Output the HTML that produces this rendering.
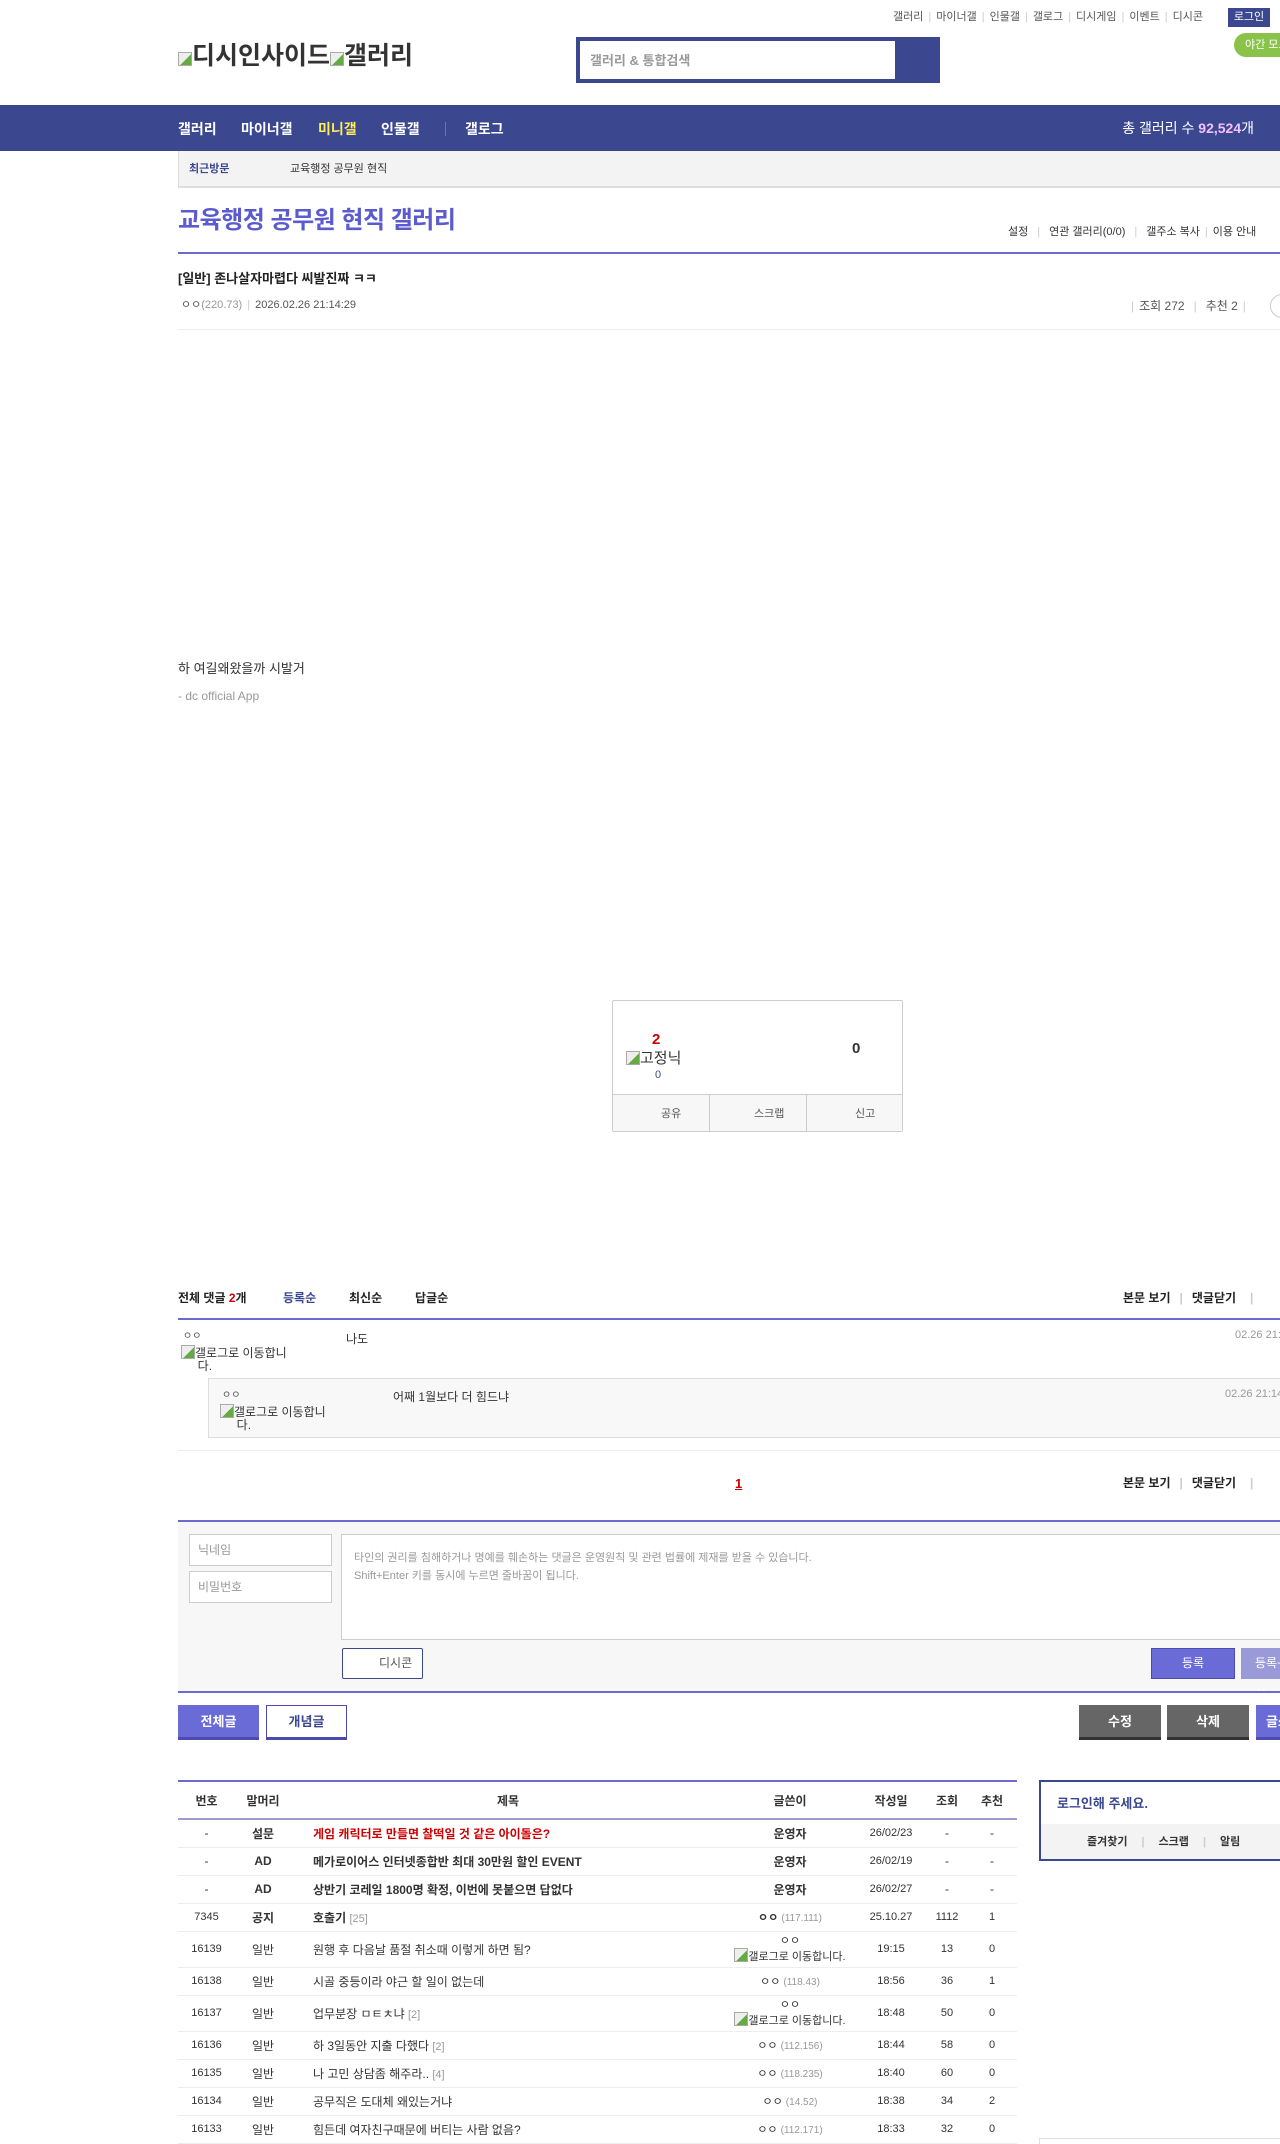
<!DOCTYPE html>
<html><head><meta charset="utf-8"><style>
*{margin:0;padding:0;box-sizing:border-box}
body{width:1280px;height:2144px;position:relative;overflow:hidden;background:#fff;font-family:"Liberation Sans","Noto Sans CJK KR",sans-serif;font-size:12px;color:#333}
.a{position:absolute;white-space:nowrap;line-height:1}
.sep{color:#ccc;margin:0 5px}
.sep2{color:#ccc;margin:0 9px}
.bx{position:absolute}
.img{display:inline-block;width:14px;height:14px;border:1px solid #aaa;background:linear-gradient(135deg,#eee 55%,#6a4 55%);vertical-align:-2px}
td{height:28px;text-align:center;font-size:12px;border-bottom:1px solid #eee;padding:0}
</style></head><body>
<div class="a" style="top:12px;left:893px;font-size:11px;color:#555">갤러리<span class="sep">|</span>마이너갤<span class="sep">|</span>인물갤<span class="sep">|</span>갤로그<span class="sep">|</span>디시게임<span class="sep">|</span>이벤트<span class="sep">|</span>디시콘</div>
<div class="bx" style="left:1228px;top:8px;width:42px;height:19px;background:#3b4890;color:#fff;font-size:11px;text-align:center;line-height:19px">로그인</div>
<div class="bx" style="left:1234px;top:33px;width:60px;height:24px;background:#8bc34a;border-radius:12px;color:#fff;font-size:11px;line-height:24px;padding-left:11px">야간 모드</div>
<div class="a" style="top:44px;left:178px;font-size:25px;font-weight:bold;color:#333"><span class="img"></span>디시인사이드<span class="img"></span>갤러리</div>
<div class="bx" style="left:576px;top:37px;width:364px;height:46px;background:#3b4890"></div>
<div class="bx" style="left:580px;top:41px;width:315px;height:38px;background:#fff"></div>
<div class="a" style="left:590px;top:54px;font-size:13px;color:#999;font-weight:bold">갤러리 &amp; 통합검색</div>
<div class="bx" style="left:0;top:105px;width:1280px;height:46px;background:#3b4890"></div>
<div class="a" style="top:122px;left:178px;font-size:14px;font-weight:bold;color:#fff">갤러리</div>
<div class="a" style="top:122px;left:241px;font-size:14px;font-weight:bold;color:#fff">마이너갤</div>
<div class="a" style="top:122px;left:318px;font-size:14px;font-weight:bold;color:#ffee55">미니갤</div>
<div class="a" style="top:122px;left:381px;font-size:14px;font-weight:bold;color:#fff">인물갤</div>
<div class="bx" style="top:122px;left:445px;width:1px;height:14px;background:#6a75b0"></div>
<div class="a" style="top:122px;left:465px;font-size:14px;font-weight:bold;color:#fff">갤로그</div>
<div class="a" style="top:121px;right:26px;font-size:14px;color:#fff">총 갤러리 수 <b style="color:#f4c0ff">92,524</b>개</div>
<div class="bx" style="left:178px;top:151px;width:1102px;height:37px;background:#f3f3f3;border-left:1px solid #ddd;border-bottom:2px solid #ddd"></div>
<div class="a" style="top:164px;left:189px;font-size:11px;font-weight:bold;color:#3b4890">최근방문</div>
<div class="a" style="top:164px;left:290px;font-size:11px;color:#333">교육행정 공무원 현직</div>
<div class="a" style="top:209px;left:178px;font-size:24px;font-weight:bold;color:#5b5bcf;letter-spacing:-0.5px">교육행정 공무원 현직 갤러리</div>
<div class="a" style="top:227px;left:1008px;font-size:11px;color:#333">설정<span class="sep2">|</span>연관 갤러리(0/0)<span class="sep2">|</span>갤주소 복사<span class="sep">|</span>이용 안내</div>
<div class="bx" style="left:178px;top:252px;width:1102px;height:2px;background:#6b6bcb"></div>
<div class="a" style="top:272px;left:178px;font-size:13px;font-weight:bold;color:#222">[일반] 존나살자마렵다 씨발진짜 ㅋㅋ</div>
<div class="a" style="top:300px;left:181px;font-size:11px;color:#555">ㅇㅇ<span style="color:#999">(220.73)</span><span class="sep">|</span>2026.02.26 21:14:29</div>
<div class="a" style="top:300px;left:1126px;font-size:12px;color:#555"><span class="sep">|</span>조회 272<span class="sep2">|</span>추천 2<span class="sep">|</span></div>
<div class="bx" style="left:1270px;top:294px;width:24px;height:24px;border:1px solid #ccc;border-radius:12px"></div>
<div class="bx" style="left:178px;top:329px;width:1102px;height:1px;background:#eee"></div>
<div class="a" style="top:662px;left:178px;font-size:13px;color:#333">하 여길왜왔을까 시발거</div>
<div class="a" style="top:690px;left:178px;font-size:12px;color:#999">- dc official App</div>
<div class="bx" style="left:612px;top:1000px;width:291px;height:132px;border:1px solid #ccc;border-radius:2px"></div>
<div class="bx" style="left:613px;top:1094px;width:289px;height:37px;background:#f7f7f7;border-top:1px solid #ccc"></div>
<div class="bx" style="left:709px;top:1094px;width:1px;height:37px;background:#ccc"></div>
<div class="bx" style="left:806px;top:1094px;width:1px;height:37px;background:#ccc"></div>
<div class="a" style="top:1032px;left:652px;font-size:15px;font-weight:bold;color:#c00">2</div>
<div class="a" style="top:1051px;left:626px;font-size:15px;color:#333"><span class="img"></span>고정닉</div>
<div class="a" style="top:1070px;left:655px;font-size:11px;color:#3b4890">0</div>
<div class="a" style="top:1041px;left:852px;font-size:15px;font-weight:bold;color:#333">0</div>
<div class="a" style="top:1109px;left:661px;font-size:11px;color:#555">공유</div>
<div class="a" style="top:1109px;left:754px;font-size:11px;color:#555">스크랩</div>
<div class="a" style="top:1109px;left:855px;font-size:11px;color:#555">신고</div>
<div class="a" style="top:1292px;left:178px;font-size:12px;font-weight:bold;color:#222">전체 댓글 <span style="color:#c00">2</span>개</div>
<div class="a" style="top:1292px;left:283px;font-size:12px;font-weight:bold;color:#3b4890">등록순</div>
<div class="a" style="top:1292px;left:349px;font-size:12px;font-weight:bold;color:#222">최신순</div>
<div class="a" style="top:1292px;left:415px;font-size:12px;font-weight:bold;color:#222">답글순</div>
<div class="a" style="top:1292px;left:1123px;font-size:12px;font-weight:bold;color:#222">본문 보기<span class="sep2">|</span>댓글닫기<span class="sep" style="margin:0 14px">|</span></div>
<div class="bx" style="left:178px;top:1318px;width:1102px;height:2px;background:#6b6bcb"></div>
<div class="a" style="top:1332px;left:183px;font-size:10px;color:#555">ㅇㅇ</div>
<div class="a" style="top:1345px;left:181px;font-size:12px;color:#333;line-height:13px"><span class="img"></span>갤로그로 이동합니<br>&nbsp;&nbsp;&nbsp;&nbsp;&nbsp;다.</div>
<div class="a" style="top:1333px;left:346px;font-size:12px;color:#333">나도</div>
<div class="a" style="top:1330px;left:1235px;font-size:11px;color:#999">02.26 21:13</div>
<div class="bx" style="left:208px;top:1378px;width:1080px;height:60px;background:#f8f8f8;border:1px solid #ddd"></div>
<div class="a" style="top:1391px;left:222px;font-size:10px;color:#555">ㅇㅇ</div>
<div class="a" style="top:1404px;left:220px;font-size:12px;color:#333;line-height:13px"><span class="img"></span>갤로그로 이동합니<br>&nbsp;&nbsp;&nbsp;&nbsp;&nbsp;다.</div>
<div class="a" style="top:1391px;left:393px;font-size:12px;color:#333">어째 1월보다 더 힘드냐</div>
<div class="a" style="top:1389px;left:1225px;font-size:11px;color:#999">02.26 21:14</div>
<div class="bx" style="left:178px;top:1450px;width:1102px;height:1px;background:#eee"></div>
<div class="a" style="top:1477px;left:735px;font-size:13px;font-weight:bold;color:#c00;text-decoration:underline">1</div>
<div class="a" style="top:1477px;left:1123px;font-size:12px;font-weight:bold;color:#222">본문 보기<span class="sep2">|</span>댓글닫기<span class="sep" style="margin:0 14px">|</span></div>
<div class="bx" style="left:178px;top:1520px;width:1102px;height:2px;background:#6b6bcb"></div>
<div class="bx" style="left:178px;top:1522px;width:1102px;height:170px;background:#f7f7f7"></div>
<div class="bx" style="left:189px;top:1534px;width:143px;height:32px;background:#fff;border:1px solid #ccc"></div>
<div class="a" style="top:1544px;left:198px;font-size:12px;color:#999">닉네임</div>
<div class="bx" style="left:189px;top:1571px;width:143px;height:32px;background:#fff;border:1px solid #ccc"></div>
<div class="a" style="top:1581px;left:198px;font-size:12px;color:#999">비밀번호</div>
<div class="bx" style="left:341px;top:1534px;width:950px;height:106px;background:#fff;border:1px solid #ccc"></div>
<div class="a" style="top:1549px;left:354px;font-size:11px;color:#999;line-height:18px">타인의 권리를 침해하거나 명예를 훼손하는 댓글은 운영원칙 및 관련 법률에 제재를 받을 수 있습니다.<br>Shift+Enter 키를 동시에 누르면 줄바꿈이 됩니다.</div>
<div class="bx" style="left:342px;top:1648px;width:81px;height:31px;background:#fff;border:1px solid #3b4890;border-radius:2px;color:#555;font-size:12px;line-height:29px;padding-left:36px">디시콘</div>
<div class="bx" style="left:1151px;top:1648px;width:84px;height:31px;background:#6b6bd8;border:1px solid #4b4bb0;color:#fff;font-size:12px;text-align:center;line-height:29px">등록</div>
<div class="bx" style="left:1241px;top:1648px;width:60px;height:31px;background:#9a9ad8;color:#fff;font-size:12px;line-height:31px;padding-left:14px">등록+추천</div>
<div class="bx" style="left:178px;top:1691px;width:1102px;height:2px;background:#6b6bcb"></div>
<div class="bx" style="left:178px;top:1705px;width:81px;height:35px;background:#6b6bd8;border-bottom:3px solid #4b4bb0;color:#fff;font-size:13px;font-weight:bold;text-align:center;line-height:33px">전체글</div>
<div class="bx" style="left:266px;top:1705px;width:81px;height:35px;background:#fff;border:1px solid #4b4bb0;border-bottom:3px solid #4b4bb0;color:#3b4890;font-size:13px;font-weight:bold;text-align:center;line-height:31px">개념글</div>
<div class="bx" style="left:1079px;top:1705px;width:82px;height:35px;background:#666;border-bottom:3px solid #333;color:#fff;font-size:13px;font-weight:bold;text-align:center;line-height:33px">수정</div>
<div class="bx" style="left:1167px;top:1705px;width:82px;height:35px;background:#666;border-bottom:3px solid #333;color:#fff;font-size:13px;font-weight:bold;text-align:center;line-height:33px">삭제</div>
<div class="bx" style="left:1256px;top:1705px;width:82px;height:35px;background:#6b6bd8;border-bottom:3px solid #4b4bb0;color:#fff;font-size:13px;font-weight:bold;line-height:33px;padding-left:10px">글쓰기</div>
<div class="bx" style="left:178px;top:1780px;width:839px;height:2px;background:#6b6bcb"></div>
<table style="position:absolute;left:178px;top:1782px;width:839px;border-collapse:collapse;table-layout:fixed">
<colgroup><col style="width:57px"><col style="width:56px"><col style="width:434px"><col style="width:130px"><col style="width:72px"><col style="width:40px"><col style="width:50px"></colgroup>
<tr style="font-weight:bold"><td style="height:37px;border-bottom:2px solid #9c9cd0">번호</td><td style="border-bottom:2px solid #9c9cd0">말머리</td><td style="border-bottom:2px solid #9c9cd0">제목</td><td style="border-bottom:2px solid #9c9cd0">글쓴이</td><td style="border-bottom:2px solid #9c9cd0">작성일</td><td style="border-bottom:2px solid #9c9cd0">조회</td><td style="border-bottom:2px solid #9c9cd0">추천</td></tr>
<tr><td>-</td><td><b>설문</b></td><td style="text-align:left;padding-left:22px;color:#c00;font-weight:bold">게임 캐릭터로 만들면 찰떡일 것 같은 아이돌은?</td><td><b>운영자</b></td><td style="font-size:11px">26/02/23</td><td>-</td><td>-</td></tr>
<tr><td>-</td><td><b>AD</b></td><td style="text-align:left;padding-left:22px;font-weight:bold">메가로이어스 인터넷종합반 최대 30만원 할인 EVENT</td><td><b>운영자</b></td><td style="font-size:11px">26/02/19</td><td>-</td><td>-</td></tr>
<tr><td>-</td><td><b>AD</b></td><td style="text-align:left;padding-left:22px;font-weight:bold">상반기 코레일 1800명 확정, 이번에 못붙으면 답없다</td><td><b>운영자</b></td><td style="font-size:11px">26/02/27</td><td>-</td><td>-</td></tr>
<tr><td style="font-size:11px">7345</td><td><b>공지</b></td><td style="text-align:left;padding-left:22px;font-weight:bold">호출기 <span style="color:#999;font-weight:normal;font-size:11px">[25]</span></td><td style="font-size:11px"><b>ㅇㅇ</b> <span style="color:#999;font-size:10px">(117.111)</span></td><td style="font-size:11px">25.10.27</td><td style="font-size:11px">1112</td><td style="font-size:11px">1</td></tr>
<tr><td style="height:36px;font-size:11px">16139</td><td>일반</td><td style="text-align:left;padding-left:22px">원행 후 다음날 품절 취소때 이렇게 하면 됨?</td><td style="line-height:14px;font-size:11px;white-space:nowrap">ㅇㅇ<br><span class="img"></span>갤로그로 이동합니다.</td><td style="font-size:11px">19:15</td><td style="font-size:11px">13</td><td style="font-size:11px">0</td></tr>
<tr><td style="font-size:11px">16138</td><td>일반</td><td style="text-align:left;padding-left:22px">시골 중등이라 야근 할 일이 없는데</td><td style="font-size:11px">ㅇㅇ <span style="color:#999;font-size:10px">(118.43)</span></td><td style="font-size:11px">18:56</td><td style="font-size:11px">36</td><td style="font-size:11px">1</td></tr>
<tr><td style="height:36px;font-size:11px">16137</td><td>일반</td><td style="text-align:left;padding-left:22px">업무분장 ㅁㅌㅊ냐 <span style="color:#999;font-size:11px">[2]</span></td><td style="line-height:14px;font-size:11px;white-space:nowrap">ㅇㅇ<br><span class="img"></span>갤로그로 이동합니다.</td><td style="font-size:11px">18:48</td><td style="font-size:11px">50</td><td style="font-size:11px">0</td></tr>
<tr><td style="font-size:11px">16136</td><td>일반</td><td style="text-align:left;padding-left:22px">하 3일동안 지출 다했다 <span style="color:#999;font-size:11px">[2]</span></td><td style="font-size:11px">ㅇㅇ <span style="color:#999;font-size:10px">(112.156)</span></td><td style="font-size:11px">18:44</td><td style="font-size:11px">58</td><td style="font-size:11px">0</td></tr>
<tr><td style="font-size:11px">16135</td><td>일반</td><td style="text-align:left;padding-left:22px">나 고민 상담좀 해주라.. <span style="color:#999;font-size:11px">[4]</span></td><td style="font-size:11px">ㅇㅇ <span style="color:#999;font-size:10px">(118.235)</span></td><td style="font-size:11px">18:40</td><td style="font-size:11px">60</td><td style="font-size:11px">0</td></tr>
<tr><td style="font-size:11px">16134</td><td>일반</td><td style="text-align:left;padding-left:22px">공무직은 도대체 왜있는거냐</td><td style="font-size:11px">ㅇㅇ <span style="color:#999;font-size:10px">(14.52)</span></td><td style="font-size:11px">18:38</td><td style="font-size:11px">34</td><td style="font-size:11px">2</td></tr>
<tr><td style="font-size:11px">16133</td><td>일반</td><td style="text-align:left;padding-left:22px">힘든데 여자친구때문에 버티는 사람 없음?</td><td style="font-size:11px">ㅇㅇ <span style="color:#999;font-size:10px">(112.171)</span></td><td style="font-size:11px">18:33</td><td style="font-size:11px">32</td><td style="font-size:11px">0</td></tr>
</table>
<div class="bx" style="left:1039px;top:1780px;width:260px;height:81px;border:2px solid #3b4890"></div>
<div class="bx" style="left:1041px;top:1824px;width:250px;height:35px;background:#f3f3f3"></div>
<div class="a" style="top:1797px;left:1057px;font-size:13px;font-weight:bold;color:#3b4890">로그인해 주세요.</div>
<div class="a" style="top:1837px;left:1087px;font-size:11px;font-weight:bold;color:#333">즐겨찾기<span class="sep" style="margin:0 14px">|</span>스크랩<span class="sep" style="margin:0 14px">|</span>알림</div>
<div class="bx" style="left:1039px;top:2138px;width:260px;height:6px;border-top:1px solid #ddd;border-left:1px solid #ddd"></div>
</body></html>
